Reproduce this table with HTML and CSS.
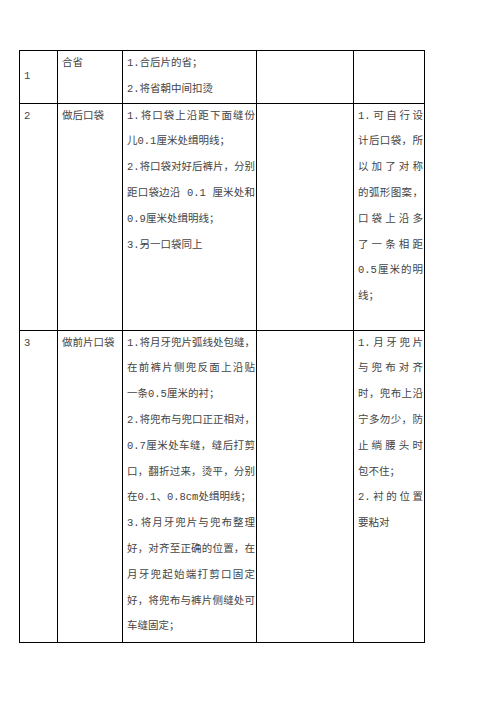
FILE: index.html
```html
<!DOCTYPE html>
<html lang="zh-CN">
<head>
<meta charset="utf-8">
<title>工序表</title>
<link rel="stylesheet" href="styles.css">
</head>
<body>
<table class="sheet">
  <colgroup>
    <col class="c-no">
    <col class="c-name">
    <col class="c-step">
    <col class="c-blank">
    <col class="c-note">
  </colgroup>
  <tbody>
    <tr class="row-1">
      <td class="mid">1</td>
      <td>合省</td>
      <td>
        <p><span class="ln">1.合后片的省；</span></p>
        <p><span class="ln">2.将省朝中间扣烫</span></p>
      </td>
      <td></td>
      <td></td>
    </tr>
    <tr class="row-2">
      <td>2</td>
      <td>做后口袋</td>
      <td>
        <p><span class="ln j">1.将口袋上沿距下面缝份</span><span class="ln">儿0.1厘米处缉明线；</span></p>
        <p><span class="ln j">2.将口袋对好后裤片，分别</span><span class="ln j">距口袋边沿 0.1 厘米处和</span><span class="ln">0.9厘米处缉明线；</span></p>
        <p><span class="ln">3.另一口袋同上</span></p>
      </td>
      <td></td>
      <td>
        <p><span class="ln j">1.可自行设</span><span class="ln j">计后口袋，所</span><span class="ln j">以加了对称</span><span class="ln j">的弧形图案，</span><span class="ln j">口袋上沿多</span><span class="ln j">了一条相距</span><span class="ln j">0.5厘米的明</span><span class="ln">线；</span></p>
      </td>
    </tr>
    <tr class="row-3">
      <td>3</td>
      <td>做前片口袋</td>
      <td>
        <p><span class="ln j">1.将月牙兜片弧线处包缝，</span><span class="ln j">在前裤片侧兜反面上沿贴</span><span class="ln">一条0.5厘米的衬；</span></p>
        <p><span class="ln j">2.将兜布与兜口正正相对，</span><span class="ln j">0.7厘米处车缝，缝后打剪</span><span class="ln j">口，翻折过来，烫平，分别</span><span class="ln">在0.1、0.8cm处缉明线；</span></p>
        <p><span class="ln j">3.将月牙兜片与兜布整理</span><span class="ln j">好，对齐至正确的位置，在</span><span class="ln j">月牙兜起始端打剪口固定</span><span class="ln j">好，将兜布与裤片侧缝处可</span><span class="ln">车缝固定；</span></p>
      </td>
      <td></td>
      <td>
        <p><span class="ln j">1.月牙兜片</span><span class="ln j">与兜布对齐</span><span class="ln j">时，兜布上沿</span><span class="ln j">宁多勿少，防</span><span class="ln j">止绱腰头时</span><span class="ln">包不住；</span></p>
        <p><span class="ln j">2.衬的位置</span><span class="ln">要粘对</span></p>
      </td>
    </tr>
  </tbody>
</table>
</body>
</html>
```
FILE: styles.css
```css
html, body {
  margin: 0;
  padding: 0;
  background: #ffffff;
}

body {
  font-family: "Liberation Mono", "Noto Sans CJK SC", monospace;
  font-size: 10.5px;
  line-height: 25.8px;
  color: #444444;
  text-autospace: ideograph-alpha ideograph-numeric;
}

.sheet {
  margin: 50px 0 0 19px;
  border-collapse: collapse;
  table-layout: fixed;
  width: 406px;
}

.c-no { width: 38px; }
.c-name { width: 65px; }
.c-step { width: 134px; }
.c-blank { width: 97px; }
.c-note { width: 71px; }

.sheet td {
  border: 1px solid #000000;
  padding: 0 1px 0 4px;
  vertical-align: top;
  overflow: hidden;
}

.sheet td.mid {
  vertical-align: middle;
}

.row-1 { height: 52px; }
.row-2 { height: 227px; }
.row-3 { height: 312px; }

.sheet p {
  margin: 0;
}

.ln {
  display: block;
  white-space: nowrap;
  text-align: left;
}

.ln.j {
  text-align: justify;
  text-align-last: justify;
}
```
